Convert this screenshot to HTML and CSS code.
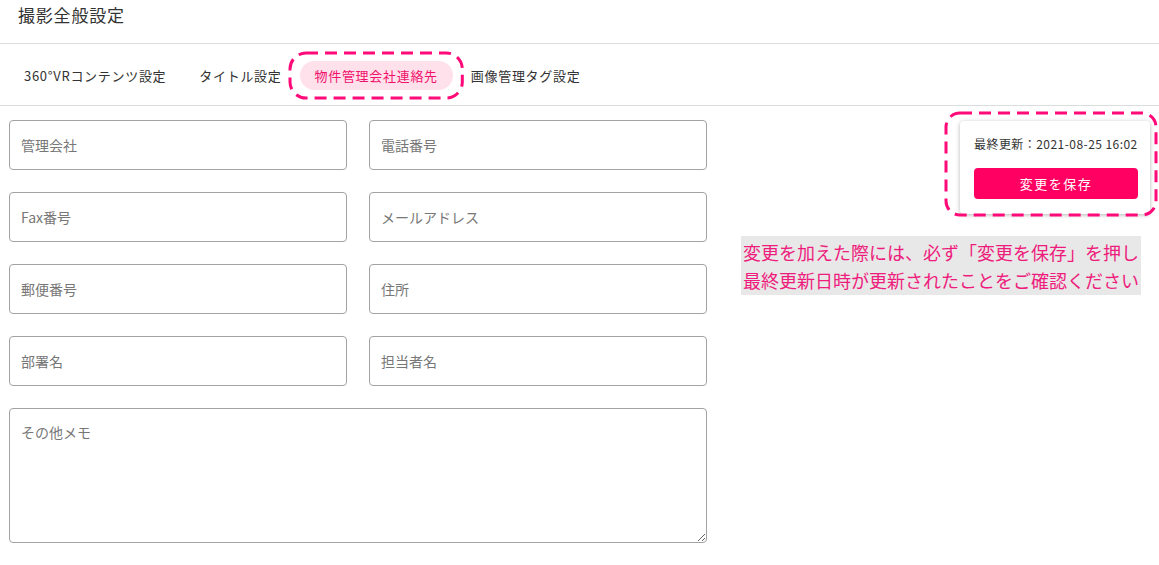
FILE: index.html
```html
<!DOCTYPE html>
<html lang="ja">
<head>
<meta charset="utf-8">
<title>撮影全般設定</title>
<link rel="stylesheet" href="styles.css">
</head>
<body>
<header class="page-header">
  <h1 class="page-title">撮影全般設定</h1>
</header>
<nav class="tabs">
  <a class="tab">360°VRコンテンツ設定</a>
  <a class="tab">タイトル設定</a>
  <a class="tab tab-active">物件管理会社連絡先
    <span class="mark mark-tab"><svg><rect width="100%" height="100%" rx="16" ry="16"/></svg></span>
  </a>
  <a class="tab">画像管理タグ設定</a>
</nav>
<main class="content">
  <form class="form-grid">
    <input class="field" type="text" placeholder="管理会社">
    <input class="field" type="text" placeholder="電話番号">
    <input class="field" type="text" placeholder="Fax番号">
    <input class="field" type="text" placeholder="メールアドレス">
    <input class="field" type="text" placeholder="郵便番号">
    <input class="field" type="text" placeholder="住所">
    <input class="field" type="text" placeholder="部署名">
    <input class="field" type="text" placeholder="担当者名">
    <textarea class="field memo" placeholder="その他メモ"></textarea>
  </form>
  <aside class="side">
    <div class="save-card">
      <p class="updated">最終更新：2021-08-25 16:02</p>
      <button class="save-btn" type="button">変更を保存</button>
      <span class="mark mark-card"><svg><rect width="100%" height="100%" rx="14" ry="14"/></svg></span>
    </div>
    <p class="note">変更を加えた際には、必ず「変更を保存」を押し<br>最終更新日時が更新されたことをご確認ください</p>
  </aside>
</main>
</body>
</html>
```
FILE: styles.css
```css
* { box-sizing: border-box; }
html, body { margin: 0; padding: 0; background: #fff; }
body {
  font-family: "Noto Sans CJK JP", "Noto Sans", sans-serif;
  color: #333;
  width: 1159px;
  overflow: hidden;
}
.page-header {
  height: 44px;
  border-bottom: 1px solid #ddd;
  padding: 4px 0 0 18px;
}
.page-title {
  margin: 0;
  font-size: 17px;
  font-weight: 400;
  letter-spacing: 0.8px;
  line-height: 22px;
  color: #333;
}
.tabs {
  display: flex;
  align-items: center;
  gap: 3px;
  height: 62px;
  padding: 0 0 0 9px;
  border-bottom: 1px solid #ddd;
}
.tab {
  position: relative;
  display: flex;
  align-items: center;
  height: 29px;
  padding: 0 15px;
  font-size: 13px;
  letter-spacing: 0.7px;
  color: #333;
  border-radius: 15px;
  white-space: nowrap;
  margin-top: 2px;
}
.tab-active {
  background: #ffe1ec;
  color: #f0106a;
}
.mark {
  position: absolute;
  pointer-events: none;
}
.mark svg {
  display: block;
  width: 100%;
  height: 100%;
  overflow: visible;
}
.mark rect {
  fill: none;
  stroke: #ff0a78;
  stroke-width: 3;
  stroke-dasharray: 12 7;
}
.mark-tab {
  left: -10px;
  right: -9px;
  top: -8px;
  bottom: -8px;
}
.content {
  display: flex;
  align-items: flex-start;
  padding: 14px 9px 0 9px;
}
.form-grid {
  display: grid;
  grid-template-columns: 338px 338px;
  gap: 22px;
  width: 698px;
  margin: 0;
}
.field {
  display: block;
  width: 100%;
  height: 50px;
  border: 1px solid #a3a3a3;
  border-radius: 4px;
  padding: 0 11px;
  font-family: "Noto Sans CJK JP", "Noto Sans", sans-serif;
  font-size: 14px;
  color: #333;
  background: #fff;
  outline: none;
  margin: 0;
}
.field::placeholder { color: #777; }
.memo {
  grid-column: 1 / 3;
  height: 135px;
  padding: 12px 11px;
  line-height: 22px;
  resize: vertical;
}
.side {
  flex: 1;
  display: flex;
  flex-direction: column;
  margin-left: 34px;
  padding-top: 1px;
}
.save-card {
  position: relative;
  align-self: flex-end;
  width: 190px;
  background: #fff;
  border-radius: 4px;
  box-shadow: 0 1px 4px rgba(0,0,0,0.3);
  padding: 14px 12px 15px 14px;
}
.updated {
  margin: 0;
  font-size: 12px;
  letter-spacing: 0.45px;
  line-height: 18px;
  color: #333;
  white-space: nowrap;
}
.save-btn {
  display: block;
  width: 164px;
  height: 31px;
  margin-top: 15px;
  border: none;
  border-radius: 4px;
  background: #ff0062;
  color: #fff;
  font-family: "Noto Sans CJK JP", "Noto Sans", sans-serif;
  font-size: 13px;
  letter-spacing: 1.5px;
}
.mark-card {
  left: -14px;
  top: -8px;
  right: -6px;
  bottom: -1px;
}
.note {
  margin: 22px 0 0 0;
  width: 400px;
  background: #e8e8e8;
  color: #ee1c7c;
  font-size: 18px;
  line-height: 28px;
  padding: 2px 0 1px 2px;
  white-space: nowrap;
  letter-spacing: 0;
}
```
